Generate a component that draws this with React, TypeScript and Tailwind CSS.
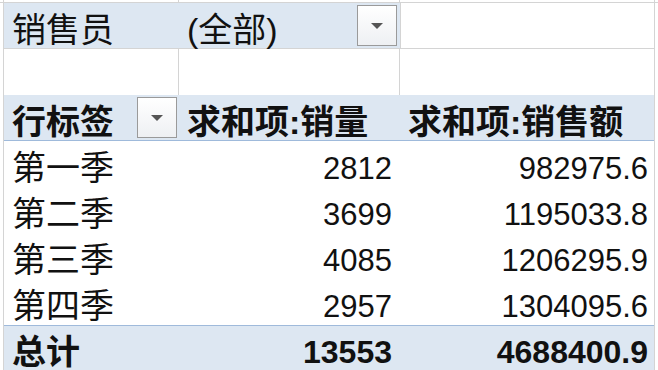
const FONT = "font-['Liberation_Sans','Noto_Sans_CJK_SC',sans-serif]";

const ROWS = [
  { label: '第一季', qty: '2812', amount: '982975.6' },
  { label: '第二季', qty: '3699', amount: '1195033.8' },
  { label: '第三季', qty: '4085', amount: '1206295.9' },
  { label: '第四季', qty: '2957', amount: '1304095.6' },
];

// Excel-style filter button with a small down triangle
function FilterButton() {
  return (
    <div className="flex h-[41px] w-[40px] items-center justify-center border border-[#9a9a9a] bg-gradient-to-b from-white to-[#eef0f3]">
      <svg width="14" height="8" viewBox="0 0 14 8">
        <path d="M1 1 L13 1 L7 7 Z" fill="#555" />
      </svg>
    </div>
  );
}

export default function App() {
  return (
    <div className={`h-[370px] w-[658px] overflow-hidden bg-white text-[#111] ${FONT}`}>
      {/* top strip above the pivot (gridline) */}
      <div className="flex h-[3px] border-b border-[#d4d4d4] pl-[3px]">
        <div className="w-[176px] border-x border-[#d4d4d4]" />
        <div className="w-[221px] border-r border-[#d4d4d4]" />
        <div className="w-[255px] border-r border-[#d4d4d4]" />
      </div>

      <div className="ml-[3px] w-[652px] border-l border-r border-[#d4d4d4]">
        {/* report filter row */}
        <div className="flex h-[46px] border-b border-[#d4d4d4]">
          <div className="flex w-[396px] items-center bg-[#dde7f2]">
            <span className="w-[175px] pl-[8px] pt-[8px] text-[34px] leading-none">销售员</span>
            <span className="flex-1 pl-[8px] pt-[8px] text-[34px] leading-none">(全部)</span>
            <div className="mr-[3px]">
              <FilterButton />
            </div>
          </div>
          <div className="flex-1 border-l border-[#d4d4d4]" />
        </div>

        {/* empty row */}
        <div className="flex h-[46px]">
          <div className="w-[175px] border-r border-[#d4d4d4]" />
          <div className="w-[221px] border-r border-[#d4d4d4]" />
          <div className="flex-1" />
        </div>

        {/* header row */}
        <div className="flex h-[46px] items-center border-b border-[#9fbadb] bg-[#dde7f2] font-bold">
          <div className="flex w-[175px] items-center justify-between pl-[8px] pr-[2px]">
            <span className="pt-[8px] text-[34px] leading-none">行标签</span>
            <FilterButton />
          </div>
          <div className="w-[221px] pl-[8px] pt-[8px] text-[34px] leading-none">求和项:销量</div>
          <div className="flex-1 pl-[8px] pt-[8px] text-[34px] leading-none">求和项:销售额</div>
        </div>

        {/* data rows */}
        {ROWS.map(r => (
          <div key={r.label} className="flex h-[46px] items-center pt-[8px]">
            <div className="w-[175px] pl-[8px] text-[34px] leading-none">{r.label}</div>
            <div className="w-[221px] pr-[8px] text-right text-[31px] leading-none">{r.qty}</div>
            <div className="flex-1 pr-[6px] text-right text-[31px] leading-none">{r.amount}</div>
          </div>
        ))}

        {/* grand total */}
        <div className="flex h-[46px] items-center border-t border-[#9fbadb] bg-[#dde7f2] pt-[6px] font-bold">
          <div className="w-[175px] pl-[8px] text-[34px] leading-none">总计</div>
          <div className="w-[221px] pr-[8px] text-right text-[32px] leading-none">13553</div>
          <div className="flex-1 pr-[6px] text-right text-[32px] leading-none">4688400.9</div>
        </div>
      </div>
    </div>
  );
}
